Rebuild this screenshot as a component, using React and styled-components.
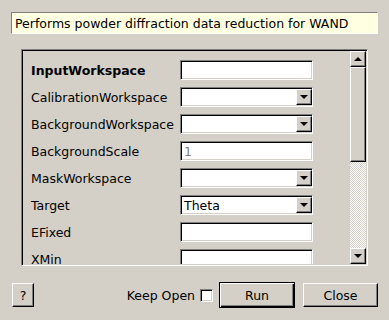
import React from 'react';
import styled, { createGlobalStyle, css } from 'styled-components';

const face = '#d4d0c8';

const GlobalStyle = createGlobalStyle`
  html, body {
    margin: 0;
    padding: 0;
    background: ${face};
  }
  body {
    font-family: "DejaVu Sans", "Liberation Sans", sans-serif;
    font-size: 12.5px;
    color: #000;
  }
`;

const sunken = css`
  border-style: solid;
  border-width: 1px;
  border-color: #808080 #fff #fff #808080;
  box-shadow: inset 1px 1px 0 #000, inset -1px -1px 0 ${face};
`;

const raised = css`
  border-style: solid;
  border-width: 1px;
  border-color: #fff #000 #000 #fff;
  box-shadow: inset -1px -1px 0 #808080;
  background: ${face};
`;

const Window = styled.div`
  width: 389px;
  height: 320px;
  box-sizing: border-box;
  padding: 12px 11px 0 11px;
  display: flex;
  flex-direction: column;
  background: ${face};
`;

const Description = styled.div`
  height: 22px;
  box-sizing: border-box;
  border-style: solid;
  border-width: 1px;
  border-color: #808080 #fff #fff #808080;
  background: #ffffe1;
  padding: 0 3px;
  display: flex;
  align-items: center;
  white-space: nowrap;
`;

const Frame = styled.div`
  margin: 15px 10px 0 10px;
  height: 217px;
  box-sizing: border-box;
  ${sunken};
  padding: 1px;
  display: flex;
`;

const Content = styled.div`
  flex: 1;
  overflow: hidden;
  padding: 9px 0 0 8px;
  display: flex;
  flex-direction: column;
  gap: 7px;
`;

const Row = styled.div`
  display: grid;
  grid-template-columns: 149px 133px;
  align-items: center;
  flex: none;
`;

const Label = styled.span`
  font-weight: ${(p) => (p.$bold ? 'bold' : 'normal')};
  white-space: nowrap;
  padding-top: 1px;
`;

const Field = styled.div`
  ${sunken};
  height: 20px;
  box-sizing: border-box;
  background: #fff;
  display: flex;
  align-items: center;
  padding: 1px 1px 1px 3px;
  color: ${(p) => (p.$placeholder ? '#808080' : '#000')};
`;

const FieldText = styled.span`
  flex: 1;
  padding-top: 1px;
`;

const Arrow = styled.span`
  width: 0;
  height: 0;
  border-left: 4px solid transparent;
  border-right: 4px solid transparent;
  ${(p) =>
    p.$up
      ? css`border-bottom: 4px solid #000;`
      : css`border-top: 4px solid #000;`}
`;

const DropButton = styled.div`
  ${raised};
  width: 16px;
  height: 16px;
  box-sizing: border-box;
  display: flex;
  align-items: center;
  justify-content: center;
  margin-right: -1px;
`;

const ScrollBar = styled.div`
  width: 16px;
  display: flex;
  flex-direction: column;
`;

const ScrollButton = styled.div`
  ${raised};
  height: 16px;
  box-sizing: border-box;
  display: flex;
  align-items: center;
  justify-content: center;
  flex: none;
`;

const Handle = styled.div`
  ${raised};
  height: 95px;
  box-sizing: border-box;
  flex: none;
`;

const Track = styled.div`
  flex: 1;
  background-image: repeating-conic-gradient(#fff 0 25%, ${face} 0 50%);
  background-size: 2px 2px;
`;

const Footer = styled.div`
  margin-top: 16px;
  height: 26px;
  display: flex;
  align-items: center;
  padding-left: 1px;
`;

const Button = styled.div`
  ${raised};
  height: 24px;
  width: ${(p) => p.$width}px;
  margin-left: ${(p) => p.$gap || 0}px;
  box-sizing: border-box;
  display: flex;
  align-items: center;
  justify-content: center;
  white-space: nowrap;
  ${(p) =>
    p.$default &&
    css`
      height: 26px;
      border: 1px solid #000;
      box-shadow: inset 1px 1px 0 #fff, inset -1px -1px 0 #000, inset -2px -2px 0 #808080;
    `}
`;

const Spacer = styled.div`
  flex: 1;
`;

const CheckLabel = styled.span`
  margin-right: 5px;
  white-space: nowrap;
`;

const CheckBox = styled.div`
  ${sunken};
  width: 13px;
  height: 13px;
  box-sizing: border-box;
  background: #fff;
  margin-right: 6px;
`;

const fields = [
  { name: 'InputWorkspace', bold: true },
  { name: 'CalibrationWorkspace', combo: true },
  { name: 'BackgroundWorkspace', combo: true },
  { name: 'BackgroundScale', placeholder: '1' },
  { name: 'MaskWorkspace', combo: true },
  { name: 'Target', combo: true, value: 'Theta' },
  { name: 'EFixed' },
  { name: 'XMin' },
  { name: 'XMax' },
];

const PropertyRow = ({ name, bold, combo, value, placeholder }) => (
  <Row>
    <Label $bold={bold}>{name}</Label>
    <Field $placeholder={!!placeholder && !value}>
      <FieldText>{value || placeholder || ''}</FieldText>
      {combo && (
        <DropButton>
          <Arrow />
        </DropButton>
      )}
    </Field>
  </Row>
);

export default function App() {
  return (
    <>
      <GlobalStyle />
      <Window>
        <Description>Performs powder diffraction data reduction for WAND</Description>
        <Frame>
          <Content>
            {fields.map((f) => (
              <PropertyRow key={f.name} {...f} />
            ))}
          </Content>
          <ScrollBar>
            <ScrollButton>
              <Arrow $up />
            </ScrollButton>
            <Handle />
            <Track />
            <ScrollButton>
              <Arrow />
            </ScrollButton>
          </ScrollBar>
        </Frame>
        <Footer>
          <Button $width={22}>?</Button>
          <Spacer />
          <CheckLabel>Keep Open</CheckLabel>
          <CheckBox />
          <Button $width={76} $default>
            Run
          </Button>
          <Button $width={75} $gap={8}>
            Close
          </Button>
        </Footer>
      </Window>
    </>
  );
}
